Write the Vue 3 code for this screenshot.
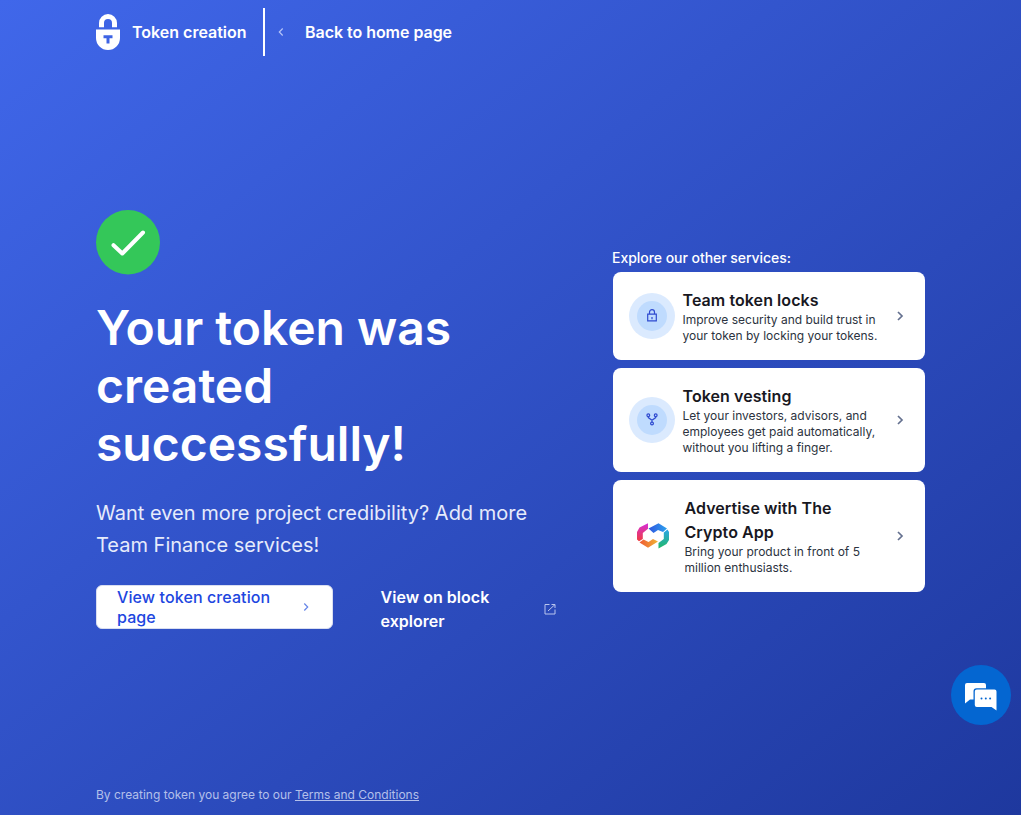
<script setup>
import { ref } from 'vue'

const services = ref([
  {
    id: 'locks',
    title: 'Team token locks',
    text: 'Improve security and build trust in your token by locking your tokens.'
  },
  {
    id: 'vesting',
    title: 'Token vesting',
    text: 'Let your investors, advisors, and employees get paid automatically, without you lifting a finger.'
  },
  {
    id: 'ads',
    title: 'Advertise with The Crypto App',
    text: 'Bring your product in front of 5 million enthusiasts.'
  }
])
</script>

<template>
  <div class="page">
    <header>
      <svg class="logo" width="24" height="36" viewBox="0 0 24 36">
        <path fill="#fff" d="M3 13.200V9a9 9 0 0 1 18 0v4.200h-5V9a4 4 0 0 0-8 0v4.200z" />
        <path fill="#fff" fill-rule="evenodd" d="M0 15.500h24V24a12 12 0 0 1-24 0zM7.500 21.300v3h3v5.200h3v-5.200h3v-3z" />
      </svg>
      <span class="product">Token creation</span>
      <a class="back" href="#">
        <svg width="8" height="10" viewBox="0 0 8 10"><path d="M5.700 1.500 2.300 5l3.400 3.500" /></svg>
        <span>Back to home page</span>
      </a>
    </header>

    <main>
      <section class="result">
        <svg class="check" width="64" height="65" viewBox="0 0 64 65">
          <ellipse cx="32" cy="32.300" rx="32" ry="32.200" fill="#34c759" />
          <path d="M17.500 35.200 26.300 43.500 47 22.500" />
        </svg>
        <h1>Your token was created successfully!</h1>
        <p>Want even more project credibility? Add more Team Finance services!</p>
        <div class="actions">
          <button class="btn">
            <span>View token creation page</span>
            <svg width="8" height="10" viewBox="0 0 8 10"><path d="M2.300 1.500 5.700 5 2.300 8.500" /></svg>
          </button>
          <a class="explorer" href="#">
            <span>View on block explorer</span>
            <svg width="12" height="12" viewBox="0 0 12 12"><path d="M5.500 1.500h-4.500v9.500h10V6.500M7.500 1.500H11v3.500M11 1.500 4 8" /></svg>
          </a>
        </div>
      </section>

      <section class="services">
        <h2>Explore our other services:</h2>
        <a v-for="service in services" :key="service.id" class="card" :class="service.id" href="#">
          <!-- multicolor hexagon mark -->
          <svg v-if="service.id === 'ads'" class="mark" width="32" height="26" viewBox="0 0 32 26">
            <defs>
              <linearGradient id="pink" x1="0" y1="0" x2="0" y2="1"><stop offset="0" stop-color="#d52ed8" /><stop offset="1" stop-color="#f03c3c" /></linearGradient>
              <linearGradient id="orange" x1="0" y1="0" x2="1" y2="0"><stop offset="0" stop-color="#ef5a35" /><stop offset="1" stop-color="#f0b434" /></linearGradient>
              <linearGradient id="blue" x1="0" y1="0" x2="1" y2="0"><stop offset="0" stop-color="#3156df" /><stop offset="1" stop-color="#2ba1ee" /></linearGradient>
              <linearGradient id="green" x1="0" y1="0" x2="0" y2="1"><stop offset="0" stop-color="#2aa5e8" /><stop offset="1" stop-color="#22b968" /></linearGradient>
            </defs>
            <path fill="url(#pink)" d="M11 .3v5.500L5.800 10v6L2 18.300 0 16.500V9l2.500-4.500z" />
            <path fill="url(#orange)" d="m2.500 19.500 4-3 5 2.500 4.500-3 5 2.500-10 6.200z" />
            <path fill="url(#blue)" d="M11.500 5.500 21.500.3 30 5.500l-4 3.500-5-2-4.500 3z" />
            <path fill="url(#green)" d="m26.800 9.500 3.700-3 1.500 2.500v8l-2.500 4-8 4.500V20l5.300-4z" />
          </svg>
          <div v-else class="badge">
            <div class="badge-inner">
              <svg v-if="service.id === 'locks'" width="10" height="13" viewBox="0 0 10 13">
                <path d="M.7 5.200h8.600v6.600H.7zM2.500 5V3.200a2.500 2.500 0 0 1 5 0V5M5 8v2.200" />
              </svg>
              <svg v-else width="12" height="13" viewBox="0 0 12 13">
                <path d="M2.300 3.600v1L6 7.200l3.700-2.600v-1M6 7v2" />
                <circle cx="2.300" cy="2.300" r="1.400" />
                <circle cx="9.700" cy="2.300" r="1.400" />
                <circle cx="6" cy="10.500" r="1.400" />
              </svg>
            </div>
          </div>
          <div class="details">
            <h3>{{ service.title }}</h3>
            <p>{{ service.text }}</p>
          </div>
          <svg class="arrow" width="8" height="10" viewBox="0 0 8 10"><path d="M2 1 6 5 2 9" /></svg>
        </a>
      </section>
    </main>

    <footer>By creating token you agree to our <a href="#">Terms and Conditions</a></footer>

    <button class="chat" aria-label="Chat">
      <svg width="34" height="30" viewBox="0 0 34 30">
        <path fill="#fff" d="M3 1h17a2 2 0 0 1 2 2v3.200H12.500a3 3 0 0 0-3 3v8.300H6L1 21.500V3a2 2 0 0 1 2-2z" />
        <path fill="#fff" d="M12.800 7.500h17.700a2 2 0 0 1 2 2v19L27.500 25H12.800a2 2 0 0 1-2-2V9.500a2 2 0 0 1 2-2z" />
        <g fill="#0466d1"><circle cx="17.500" cy="16.500" r="1" /><circle cx="21.800" cy="16.500" r="1" /><circle cx="26.100" cy="16.500" r="1" /></g>
      </svg>
    </button>
  </div>
</template>

<style>
body {
  margin: 0;
}
</style>

<style scoped>
.page {
  box-sizing: border-box;
  display: flex;
  flex-direction: column;
  height: 100vh;
  padding: 0 96px;
  overflow: hidden;
  color: #fff;
  font-family: Inter, sans-serif;
  background: linear-gradient(to bottom right, #4067ea, #1e389e);
}

h1, h2, h3, p {
  margin: 0;
}

a {
  color: inherit;
  text-decoration: none;
}

svg {
  flex: none;
}

header {
  display: flex;
  align-items: center;
  height: 64px;
  flex: none;
  font-size: 16px;
  font-weight: 600;
  line-height: 24px;
}

.product {
  margin-left: 12px;
  width: 131px;
  white-space: nowrap;
}

.back {
  display: flex;
  align-items: center;
  gap: 20px;
  height: 48px;
  padding-left: 12px;
  border-left: 2px solid #fff;
  letter-spacing: -0.04px;
}

.back path {
  fill: none;
  stroke: #b5c4f8;
  stroke-width: 1.2;
}

main {
  flex: 1;
  display: flex;
  align-items: center;
  justify-content: space-between;
}

.result {
  width: 460px;
}

.check {
  display: block;
}

.check path {
  fill: none;
  stroke: #fff;
  stroke-width: 4;
  stroke-linecap: round;
  stroke-linejoin: round;
}

h1 {
  width: 400px;
  margin-top: 24px;
  font-size: 48px;
  font-weight: 600;
  line-height: 58px;
}

.result p {
  margin: 24px 0;
  color: #e6ebfb;
  font-size: 20px;
  line-height: 32px;
}

.actions {
  display: flex;
  align-items: flex-start;
  justify-content: space-between;
}

.btn {
  box-sizing: border-box;
  display: flex;
  align-items: center;
  justify-content: space-between;
  width: 237px;
  height: 44px;
  padding: 0 22px 0 20px;
  color: #1d46e0;
  background: #fff;
  border: 1px solid #d9def0;
  border-radius: 6px;
  font: 500 16px/20px Inter, sans-serif;
  letter-spacing: 0.1px;
  text-align: left;
}

.btn span {
  width: 165px;
}

.btn path {
  fill: none;
  stroke: #6585e8;
  stroke-width: 1.2;
}

.explorer {
  display: flex;
  align-items: center;
  justify-content: space-between;
  width: 175.5px;
  font-size: 16px;
  font-weight: 600;
  line-height: 24px;
  letter-spacing: 0.03px;
}

.explorer span {
  width: 120px;
}

.explorer path {
  fill: none;
  stroke: #b9c5ee;
  stroke-width: 1;
}

.services {
  display: flex;
  flex-direction: column;
  gap: 8px;
  width: 313px;
  padding-bottom: 4px;
}

h2 {
  margin-bottom: -4px;
  font-size: 14px;
  font-weight: 500;
  line-height: 20px;
  letter-spacing: -0.04px;
}

.card {
  display: flex;
  align-items: center;
  padding: 16px;
  margin-left: 1px;
  color: #18181f;
  background: #fff;
  border-radius: 8px;
}

.badge {
  flex: none;
  box-sizing: border-box;
  width: 46px;
  height: 46px;
  padding: 8px;
  margin-right: 7.5px;
  background: #dbeafe;
  border-radius: 50%;
}

.badge-inner {
  display: flex;
  align-items: center;
  justify-content: center;
  height: 30px;
  background: #bfdbfe;
  border-radius: 50%;
}

.badge svg {
  fill: none;
  stroke: #2f4bd0;
  stroke-width: 1.2;
}

.mark {
  margin: 0 15.5px 0 8px;
}

.details {
  width: 200px;
}

.ads .details {
  width: 180px;
}

h3 {
  font-size: 16px;
  font-weight: 600;
  line-height: 24px;
  letter-spacing: 0.07px;
}

.details p {
  color: #2c3340;
  font-size: 12px;
  line-height: 16px;
}

.arrow {
  margin: 0 5.5px 0 auto;
}

.arrow path {
  fill: none;
  stroke: #64708f;
  stroke-width: 1.7;
}

footer {
  flex: none;
  height: 28px;
  padding-top: 8px;
  color: #b4c0ea;
  font-size: 12px;
  line-height: 16px;
}

footer a {
  text-decoration: underline;
}

.chat {
  position: fixed;
  right: 10px;
  bottom: 90px;
  display: flex;
  align-items: center;
  justify-content: center;
  width: 60px;
  height: 60px;
  padding: 3px 0 0;
  background: #0466d1;
  border: none;
  border-radius: 50%;
}
</style>
